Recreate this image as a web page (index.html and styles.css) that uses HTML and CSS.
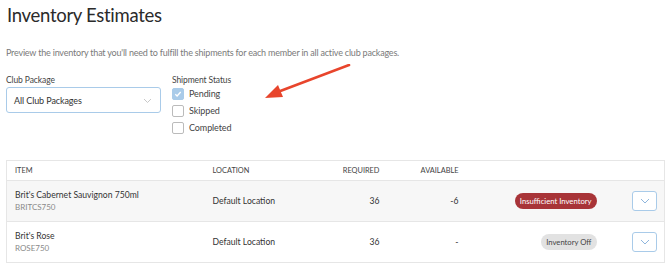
FILE: index.html
```html
<!DOCTYPE html>
<html lang="en">
<head>
  <meta charset="UTF-8" />
  <title>Inventory Estimates</title>
  <link rel="stylesheet" href="styles.css">
</head>
<body>
  <div class="page">
    <h1 class="title">Inventory Estimates</h1>
    <p class="intro">Preview the inventory that you'll need to fulfill the shipments for each member in all active club packages.</p>

    <div class="filters">
      <div class="field">
        <label class="field-label">Club Package</label>
        <div class="select">
          <span>All Club Packages</span>
          <svg class="chev" width="9" height="6" viewBox="0 0 9 6"><path d="M1 1l3.5 3.5L8 1" fill="none" stroke="#c8c8c8" stroke-width="1"/></svg>
        </div>
      </div>
      <div class="field status">
        <span class="field-label">Shipment Status</span>
        <label class="check"><span class="box on"><svg width="10" height="10" viewBox="0 0 10 10"><path d="M2.3 5.2l1.8 1.8 3.6-4" fill="none" stroke="#fff" stroke-width="1.3"/></svg></span>Pending</label>
        <label class="check"><span class="box"></span>Skipped</label>
        <label class="check"><span class="box"></span>Completed</label>
        <svg class="arrow" width="100" height="40" viewBox="0 0 100 40">
          <path d="M94 1L20 29" stroke="#e8452c" stroke-width="2.6" stroke-linecap="round"/>
          <path d="M10 34L23 21L28 33Z" fill="#e8452c"/>
        </svg>
      </div>
    </div>

    <table class="grid">
      <colgroup>
        <col class="w-item"><col class="w-loc"><col class="w-req"><col class="w-avail"><col><col class="w-btn">
      </colgroup>
      <thead>
        <tr>
          <th class="c-item">Item</th>
          <th>Location</th>
          <th class="c-num">Required</th>
          <th class="c-num">Available</th>
          <th></th>
          <th></th>
        </tr>
      </thead>
      <tbody>
        <tr class="shade">
          <td class="c-item"><div class="name">Brit's Cabernet Sauvignon 750ml</div><div class="sku">BRITCS750</div></td>
          <td>Default Location</td>
          <td class="c-num">36</td>
          <td class="c-num">-6</td>
          <td class="c-badge"><span class="badge danger">Insufficient Inventory</span></td>
          <td class="c-btn"><button class="expand"><svg width="10" height="6" viewBox="0 0 10 6"><path d="M1 1l4 4 4-4" fill="none" stroke="#8fb6dd" stroke-width="1"/></svg></button></td>
        </tr>
        <tr>
          <td class="c-item"><div class="name">Brit's Rose</div><div class="sku">ROSE750</div></td>
          <td>Default Location</td>
          <td class="c-num">36</td>
          <td class="c-num">-</td>
          <td class="c-badge"><span class="badge off">Inventory Off</span></td>
          <td class="c-btn"><button class="expand"><svg width="10" height="6" viewBox="0 0 10 6"><path d="M1 1l4 4 4-4" fill="none" stroke="#8fb6dd" stroke-width="1"/></svg></button></td>
        </tr>
      </tbody>
    </table>
  </div>
</body>
</html>
```

FILE: styles.css
```css
html, body { margin: 0; background: #fff; }
body {
  font-family: Lato, "Liberation Sans", sans-serif;
  color: #333;
}
.page {
  padding: 0 5px 0 6px;
}
.title {
  margin: 0;
  padding: 2px 0 0 1px;
  font-size: 18.5px;
  letter-spacing: -0.3px;
  font-weight: 400;
  line-height: 26px;
  color: #2b2b2b;
}
.intro {
  margin: 18px 0 0 0;
  font-size: 9px;
  letter-spacing: -0.2px;
  line-height: 14px;
  color: #7a7a7a;
}

/* Filters */
.filters {
  display: flex;
  gap: 11px;
  margin-top: 13px;
}
.field {
  display: flex;
  flex-direction: column;
}
.field-label {
  font-size: 8.5px;
  letter-spacing: -0.1px;
  line-height: 14px;
  color: #444;
}
.status .field-label { margin-bottom: -2px; }
.select {
  width: 138px;
  height: 24px;
  border: 1px solid #a9cbe9;
  border-radius: 3px;
  display: flex;
  align-items: center;
  justify-content: space-between;
  padding: 0 8px 0 7px;
  font-size: 9px;
  letter-spacing: -0.1px;
  color: #333;
}
.chev { margin-top: 2px; }
.status { position: relative; }
.check {
  display: flex;
  align-items: center;
  gap: 5px;
  height: 17px;
  font-size: 9px;
  letter-spacing: -0.1px;
  color: #444;
}
.box {
  width: 10px;
  height: 10px;
  border: 1px solid #bbb;
  border-radius: 2px;
  display: flex;
  align-items: center;
  justify-content: center;
}
.box.on {
  background: #a9cbe9;
  border-color: #a9cbe9;
}
.arrow {
  position: absolute;
  left: 83px;
  top: -9px;
}

/* Table */
.grid {
  width: 100%;
  margin-top: 24px;
  border-collapse: collapse;
  table-layout: fixed;
  border: 1px solid #e6e6e6;
  font-size: 8.6px;
}
.w-item { width: 206px; }
.w-loc { width: 119px; }
.w-req { width: 56px; }
.w-avail { width: 79px; }
.w-btn { width: 55px; }
.grid th {
  text-align: left;
  font-weight: 400;
  font-size: 7.4px;
  text-transform: uppercase;
  color: #444;
  height: 19px;
  padding: 0;
  border-bottom: 1px solid #e6e6e6;
}
.grid td {
  height: 40px;
  padding: 0;
  color: #333;
}
.grid tbody tr + tr td { border-top: 1px solid #e6e6e6; }
.grid tr.shade td { background: #f7f7f7; }
.grid .c-item { padding-left: 8px; }
.grid .c-num { text-align: right; padding-right: 8px; }
.name { font-size: 8.6px; line-height: 12px; }
.sku { font-size: 8px; color: #8a8a8a; line-height: 12px; }
.grid .c-badge { text-align: right; padding-right: 13px; }
.badge {
  display: inline-block;
  font-size: 7.7px;
  line-height: 16px;
  padding: 0 5px;
  border-radius: 8px;
}
.danger { background: #a83438; color: #fff; }
.off { background: #e2e2e2; color: #444; }
.grid .c-btn { text-align: right; padding-right: 7px; }
.expand {
  width: 25px;
  height: 20px;
  border: 1px solid #a9cbe9;
  border-radius: 3px;
  background: #fff;
  padding: 0;
  display: inline-flex;
  align-items: center;
  justify-content: center;
  vertical-align: middle;
}
```
